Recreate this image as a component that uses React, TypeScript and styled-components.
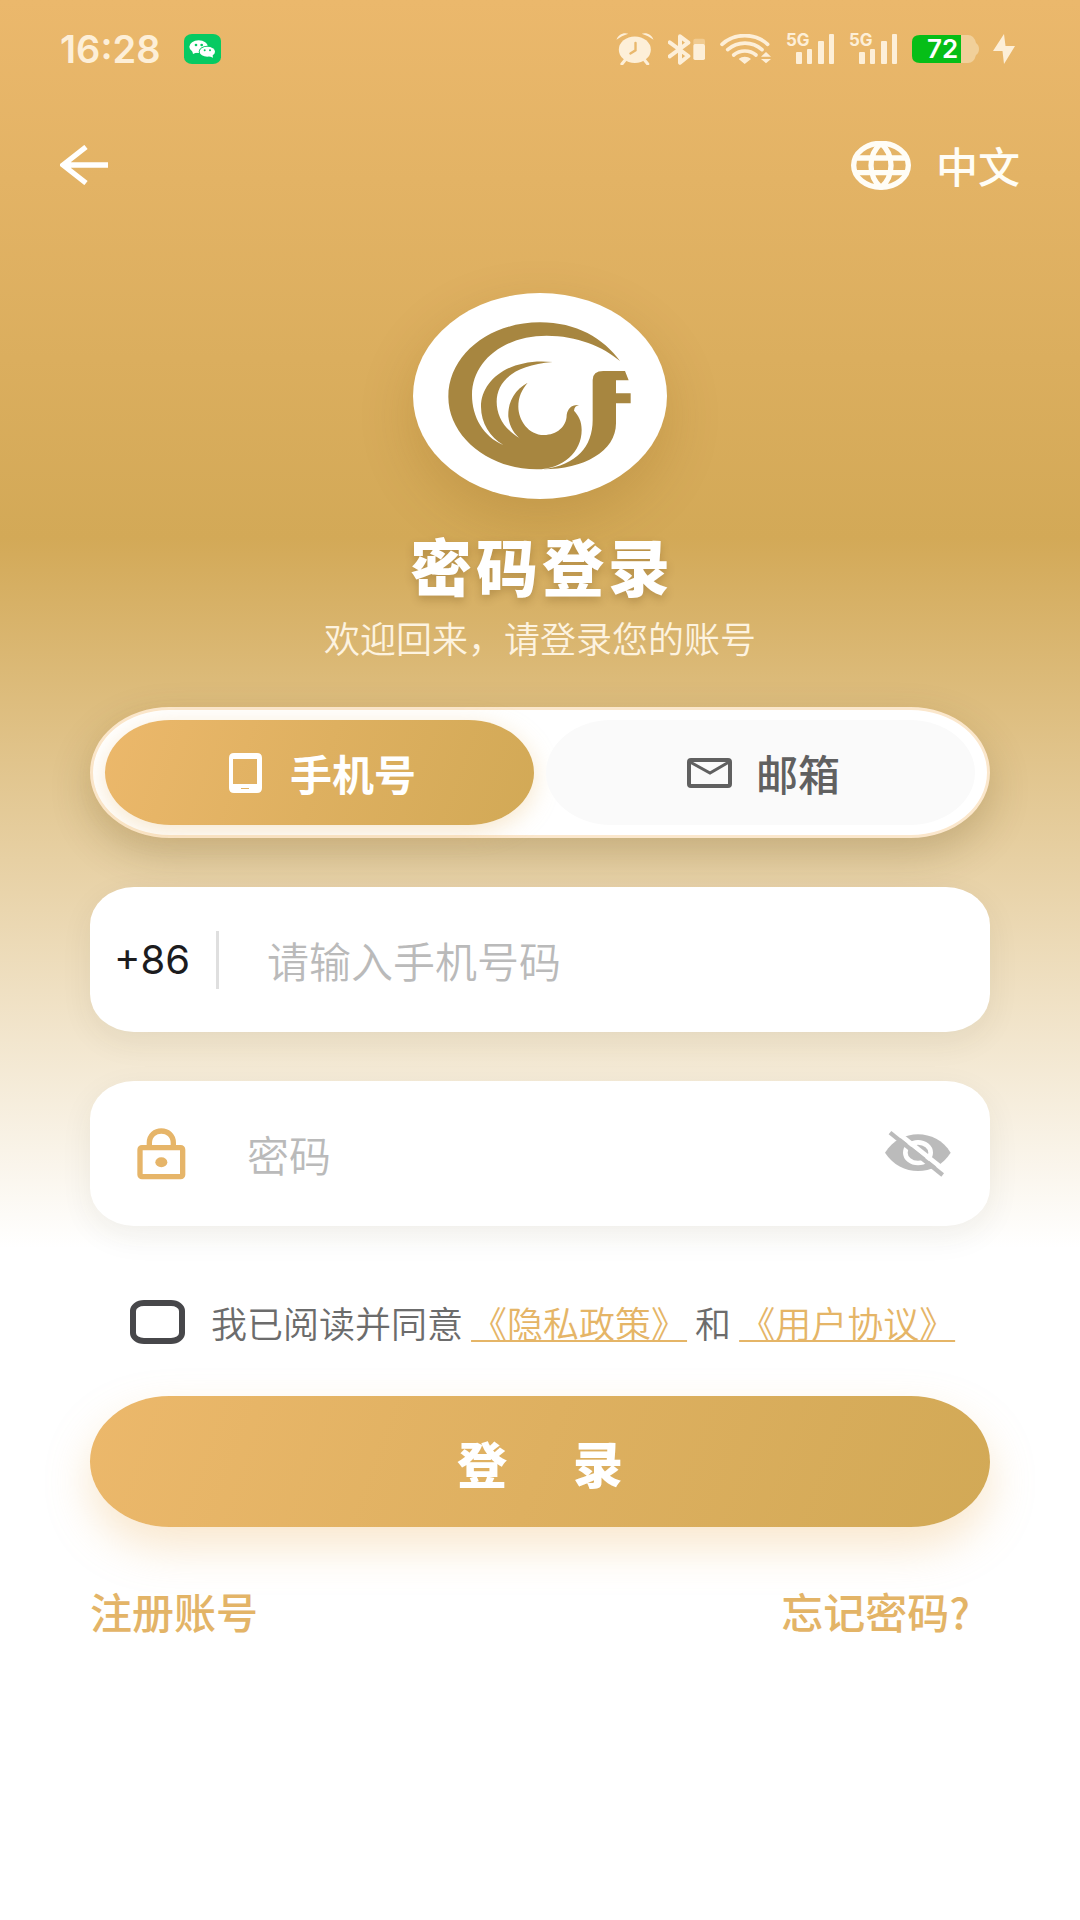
import { FC, useState } from "react";
import styled, { createGlobalStyle, css } from "styled-components";

const GlobalStyle = createGlobalStyle`
  *, *::before, *::after {
    box-sizing: border-box;
  }

  body {
    margin: 0;
    background: #ffffff;
    font-family: "Noto Sans CJK SC", "Noto Sans", sans-serif;
  }

  button, input {
    font: inherit;
    border: none;
    margin: 0;
    padding: 0;
    background: none;
  }
`;

const gold = "linear-gradient(110deg, #ecb86b 0%, #deb060 50%, #d2a956 100%)";

const Page = styled.div`
  min-height: 100vh;
  background: linear-gradient(
    180deg,
    #ebb86c 0%,
    #d3a957 28%,
    #ffffff 65%,
    #ffffff 100%
  );
`;

const StatusBar = styled.header`
  display: flex;
  align-items: center;
  justify-content: space-between;
  height: 98px;
  padding: 0 65px 0 60px;
  color: #fdefd8;
`;

const StatusGroup = styled.div<{ $gap: number }>`
  display: flex;
  align-items: center;
  gap: ${(p) => p.$gap}px;
`;

const Clock = styled.time`
  font-family: Inter, sans-serif;
  font-size: 38px;
  font-weight: 600;
`;

const NavBar = styled.nav`
  display: flex;
  align-items: center;
  justify-content: space-between;
  height: 134px;
  padding: 0 60px;
`;

const NavButton = styled.button`
  display: flex;
  align-items: center;
  gap: 25px;
  color: #fffdf6;
  font-size: 42px;
  line-height: 48px;
  font-weight: 500;
  cursor: pointer;
`;

const Content = styled.main`
  display: flex;
  flex-direction: column;
  padding: 61px 90px 0;
`;

const Brand = styled.div`
  display: flex;
  flex-direction: column;
  align-items: center;
  text-align: center;
`;

const LogoPlate = styled.div`
  display: flex;
  border-radius: 50%;
  background: #ffffff;
  box-shadow: 0 20px 56px rgba(120, 80, 10, 0.2);
`;

const Title = styled.h1`
  margin: 30px 0 0;
  padding-left: 4px;
  font-size: 62px;
  line-height: 72px;
  font-weight: 900;
  letter-spacing: 4px;
  color: #ffffff;
  text-shadow: 0 4px 8px rgba(90, 60, 10, 0.25);
`;

const Subtitle = styled.p`
  margin: 14px 0 0;
  font-size: 36px;
  line-height: 44px;
  font-weight: 350;
  color: #fdf3e0;
`;

const Tabs = styled.div`
  display: grid;
  grid-template-columns: 1fr 1fr;
  gap: 12px;
  height: 131px;
  margin-top: 48px;
  padding: 10px 12px;
  border: 3px solid #fbe7cc;
  border-radius: 80px / 66px;
  background: #ffffff;
  box-shadow: 0 16px 40px rgba(90, 70, 20, 0.24);
`;

const Tab = styled.button<{ $active: boolean }>`
  display: flex;
  align-items: center;
  justify-content: center;
  padding-left: 6px;
  border-radius: 66px / 53px;
  background: #fafafa;
  color: #606060;
  font-size: 42px;
  font-weight: 500;
  cursor: pointer;

  ${(p) =>
    p.$active &&
    css`
      background: ${gold};
      color: #ffffff;
      font-weight: 700;
      box-shadow: 0 6px 24px rgba(232, 182, 107, 0.35);
    `}
`;

const TabLabel = styled.span<{ $gap: number }>`
  margin-left: ${(p) => p.$gap}px;
`;

const Field = styled.div`
  display: flex;
  align-items: center;
  height: 145px;
  margin-top: 49px;
  border-radius: 44px / 38px;
  background: #ffffff;
  box-shadow: 0 10px 32px rgba(60, 50, 30, 0.07);
`;

const CountryCode = styled.button`
  padding: 0 26px 0 24px;
  color: #1c1c1e;
  font-family: Inter, sans-serif;
  font-size: 40px;
  cursor: pointer;
`;

const Divider = styled.span`
  flex: none;
  width: 3px;
  height: 58px;
  background: #dfdfdf;
`;

const FieldIcon = styled.span`
  display: flex;
  flex: none;
  margin-left: 47px;
`;

const FieldInput = styled.input<{ $indent: number }>`
  flex: 1;
  min-width: 0;
  height: 100%;
  padding-left: ${(p) => p.$indent}px;
  outline: none;
  color: #1c1c1e;
  font-size: 42px;
  font-weight: 350;

  &::placeholder {
    color: #bababa;
    opacity: 1;
  }
`;

const EyeButton = styled.button`
  display: flex;
  flex: none;
  margin-right: 39px;
  cursor: pointer;
`;

const Agreement = styled.div`
  display: flex;
  align-items: center;
  gap: 26px;
  height: 48px;
  margin-top: 72px;
  padding-left: 40px;
  color: #6c6c6c;
  font-size: 36px;
  line-height: 48px;
  font-weight: 350;
  white-space: nowrap;
`;

const CheckBox = styled.input`
  appearance: none;
  flex: none;
  width: 55px;
  height: 44px;
  border: 6px solid #47474a;
  border-radius: 14px / 11px;
  cursor: pointer;

  &:checked {
    background: #e6b568;
  }
`;

const PolicyLink = styled.a`
  color: #e5b567;
  text-decoration: underline;
  text-decoration-thickness: 2px;
  text-underline-offset: 2px;
`;

const SubmitButton = styled.button`
  height: 131px;
  margin-top: 50px;
  padding-left: 8px;
  border-radius: 80px / 66px;
  background: ${gold};
  box-shadow: 0 20px 44px rgba(236, 184, 107, 0.34);
  color: #ffffff;
  font-size: 50px;
  font-weight: 900;
  letter-spacing: 8px;
  cursor: pointer;
`;

const Footer = styled.footer`
  display: flex;
  justify-content: space-between;
  margin-top: 56px;
  padding-right: 20px;
`;

const FooterLink = styled.a`
  color: #e3b467;
  font-size: 42px;
  line-height: 56px;
  font-weight: 500;
  text-decoration: none;
`;

const WeChatIcon: FC = () => (
  <svg width="37" height="30" viewBox="0 0 111 90">
    <rect width="111" height="90" rx="24" ry="20" fill="#07ca62" />
    <g fill="#ffffff">
      <ellipse cx="44" cy="38" rx="28" ry="19" />
      <path d="M24 48l3 12 14-6z" />
      <ellipse cx="70" cy="53" rx="26" ry="18" fill="#07ca62" />
      <ellipse cx="70" cy="53" rx="23" ry="15" />
      <path d="M74 66l13 5-2-12z" />
    </g>
    <g fill="#07ca62">
      <circle cx="36" cy="33" r="4" />
      <circle cx="53" cy="33" r="4" />
      <circle cx="62" cy="49" r="3" />
      <circle cx="78" cy="49" r="3" />
    </g>
  </svg>
);

const AlarmIcon: FC = () => (
  <svg width="38" height="32" viewBox="0 0 111 94" fill="currentColor">
    <ellipse cx="55" cy="49" rx="47" ry="39" />
    <path d="M1 20C6 4 22-3 36 2 22 6 12 12 1 20zM110 20C105 4 89-3 75 2c14 4 24 10 35 18z" />
    <path
      d="M26 80l-9 11M84 80l9 11"
      stroke="currentColor"
      strokeWidth="9"
      strokeLinecap="round"
    />
    <path
      d="M57 29v22L42 60"
      fill="none"
      stroke="#e9b86d"
      strokeWidth="7"
      strokeLinecap="round"
    />
  </svg>
);

const BluetoothIcon: FC = () => (
  <svg width="38" height="31" viewBox="0 0 114 93">
    <path
      d="M5 25l56 41-25 20V7l25 19L5 67"
      fill="none"
      stroke="currentColor"
      strokeWidth="12"
      strokeLinejoin="round"
      strokeLinecap="round"
    />
    <rect x="76" y="14" width="35" height="20" rx="6" fill="#f1cb90" />
    <rect x="76" y="30" width="35" height="48" rx="5" fill="currentColor" />
  </svg>
);

const WifiIcon: FC = () => (
  <svg width="52" height="30" viewBox="0 0 156 90">
    <g
      fill="none"
      stroke="currentColor"
      strokeWidth="11"
      strokeLinecap="round"
    >
      <path d="M6 31C43-4 106-4 143 31" />
      <path d="M23 47c30-26 74-26 103 0" />
      <path d="M41 63c19-16 48-16 67 0" />
    </g>
    <path
      d="M56 75c11-9 26-9 37 0L74 90zM123 68l15-14 15 14zM123 75l15 13 15-13z"
      fill="currentColor"
    />
  </svg>
);

const SignalText = styled.text`
  font-family: Inter, sans-serif;
  font-size: 17px;
  font-weight: 700;
`;

const SignalIcon: FC = () => (
  <svg width="49" height="48" viewBox="0 -8 49 48" fill="currentColor">
    <SignalText x="0" y="13">
      5G
    </SignalText>
    <rect x="10" y="19" width="6" height="12" rx="1" />
    <rect x="21" y="16" width="5" height="15" rx="1" />
    <rect x="32" y="8" width="6" height="23" rx="1" />
    <rect x="43" y="1" width="5" height="30" rx="1" />
  </svg>
);

const BatteryText = styled.text`
  font-family: Inter, sans-serif;
  font-size: 26px;
  font-weight: 600;
  fill: #ffffff;
`;

const BatteryIcon: FC = () => (
  <svg width="67" height="44" viewBox="0 -8 67 44">
    <path
      d="M48 0h8q6 0 8 8q3 2 3 6t-3 6q-2 8-8 8h-8z"
      fill="#f1d09a"
    />
    <path d="M8 0h41v28H8q-8 0-8-7V7q0-7 8-7z" fill="#06be17" />
    <BatteryText x="15" y="23">
      72
    </BatteryText>
  </svg>
);

const BoltIcon: FC = () => (
  <svg width="22" height="30" viewBox="0 0 22 30" fill="currentColor">
    <path d="M11 0L0 17h9.500l1.500 13L22 12h-9.500z" />
  </svg>
);

const BackIcon: FC = () => (
  <svg width="48" height="40" viewBox="0 0 144 120">
    <path
      d="M78 6L9 60l69 54M9 60h135"
      fill="none"
      stroke="#ffffff"
      strokeWidth="16"
    />
  </svg>
);

const GlobeIcon: FC = () => (
  <svg
    width="60"
    height="49"
    viewBox="0 0 180 147"
    fill="none"
    stroke="#fffdf6"
    strokeWidth="16"
  >
    <ellipse cx="90" cy="73" rx="82" ry="66" />
    <path d="M90 7C50 42 50 104 90 140M90 7c40 35 40 97 0 133M16 51h148M16 95h148" />
  </svg>
);

const Logo: FC = () => (
  <svg width="254" height="206" viewBox="69 69 762 618" fill="#a78640">
    <path d="M690 273C640 205 560 157 450 157C298 157 175 255 175 380C175 502 300 598 440 598C520 598 575 545 575 480C575 452 565 436 552 422C553 412 558 407 567 405C545 403 533 415 530 435C530 470 500 495 462 495C415 495 385 450 385 410C385 380 395 360 413 338C375 358 353 395 355 440C358 470 375 495 393 507C345 480 320 440 320 395C320 335 370 285 488 276C360 262 273 330 273 410C273 460 300 500 340 525C280 500 246 440 246 375C246 275 340 197 470 197C560 197 640 230 690 273Z" />
    <path d="M460 598C560 585 608 530 608 450V330Q608 303 640 303H705L716 331H678V370H722V400H678V460C678 545 580 598 460 598Z" />
  </svg>
);

const PhoneIcon: FC = () => (
  <svg width="33" height="40" viewBox="0 0 33 40">
    <path
      fillRule="evenodd"
      fill="#ffffff"
      d="M5 0h23q5 0 5 5v30q0 5-5 5H5q-5 0-5-5V5q0-5 5-5zM4 6v25h24V6zM12 35v1h8v-1z"
    />
  </svg>
);

const MailIcon: FC = () => (
  <svg width="45" height="30" viewBox="0 0 45 30">
    <rect
      x="2"
      y="2"
      width="41"
      height="26"
      rx="2"
      fill="none"
      stroke="#606060"
      strokeWidth="4"
    />
    <path d="M3 4l20 11L42 4" fill="none" stroke="#606060" strokeWidth="3" />
  </svg>
);

const LockIcon: FC = () => (
  <svg width="49" height="52" viewBox="0 0 147 156">
    <g fill="none" stroke="#e6b569" strokeWidth="16">
      <rect x="9" y="59" width="128" height="87" rx="6" />
      <path d="M37 59V45c0-48 72-48 72 0v14" />
    </g>
    <ellipse cx="73" cy="103" rx="18" ry="15" fill="#e6b569" />
  </svg>
);

const EyeOffIcon: FC = () => (
  <svg width="66" height="48" viewBox="134 182 198 144">
    <path
      d="M134 250C158 213 195 195 233 195S308 213 331 250C308 287 271 305 233 305S158 287 134 250z"
      fill="#bbbbbb"
    />
    <ellipse
      cx="233"
      cy="250"
      rx="38"
      ry="31"
      fill="none"
      stroke="#ffffff"
      strokeWidth="14"
    />
    <path d="M160 181l158 126" stroke="#ffffff" strokeWidth="14" />
    <path d="M149 190l158 127" stroke="#bbbbbb" strokeWidth="13" />
  </svg>
);

type LoginMode = "phone" | "email";

const App: FC = () => {
  const [mode, setMode] = useState<LoginMode>("phone");
  const [visible, setVisible] = useState(false);

  return (
    <>
      <GlobalStyle />
      <Page>
        <StatusBar>
          <StatusGroup $gap={23}>
            <Clock>16:28</Clock>
            <WeChatIcon />
          </StatusGroup>
          <StatusGroup $gap={14}>
            <AlarmIcon />
            <BluetoothIcon />
            <WifiIcon />
            <SignalIcon />
            <SignalIcon />
            <BatteryIcon />
            <BoltIcon />
          </StatusGroup>
        </StatusBar>
        <NavBar>
          <NavButton type="button" aria-label="返回">
            <BackIcon />
          </NavButton>
          <NavButton type="button">
            <GlobeIcon />
            中文
          </NavButton>
        </NavBar>
        <Content>
          <Brand>
            <LogoPlate>
              <Logo />
            </LogoPlate>
            <Title>密码登录</Title>
            <Subtitle>欢迎回来，请登录您的账号</Subtitle>
          </Brand>
          <Tabs>
            <Tab
              type="button"
              $active={mode === "phone"}
              onClick={() => setMode("phone")}
            >
              <PhoneIcon />
              <TabLabel $gap={28}>手机号</TabLabel>
            </Tab>
            <Tab
              type="button"
              $active={mode === "email"}
              onClick={() => setMode("email")}
            >
              <MailIcon />
              <TabLabel $gap={24}>邮箱</TabLabel>
            </Tab>
          </Tabs>
          <Field>
            <CountryCode type="button">+86</CountryCode>
            <Divider />
            <FieldInput
              $indent={48}
              type="tel"
              aria-label="手机号码"
              placeholder="请输入手机号码"
            />
          </Field>
          <Field>
            <FieldIcon>
              <LockIcon />
            </FieldIcon>
            <FieldInput
              $indent={61}
              type={visible ? "text" : "password"}
              aria-label="密码"
              placeholder="密码"
            />
            <EyeButton
              type="button"
              aria-label="显示密码"
              onClick={() => setVisible(!visible)}
            >
              <EyeOffIcon />
            </EyeButton>
          </Field>
          <Agreement>
            <CheckBox type="checkbox" id="agree" />
            <div>
              <label htmlFor="agree">我已阅读并同意</label>{" "}
              <PolicyLink href="#privacy">《隐私政策》</PolicyLink> 和{" "}
              <PolicyLink href="#terms">《用户协议》</PolicyLink>
            </div>
          </Agreement>
          <SubmitButton type="submit">登　录</SubmitButton>
          <Footer>
            <FooterLink href="#register">注册账号</FooterLink>
            <FooterLink href="#forgot">忘记密码?</FooterLink>
          </Footer>
        </Content>
      </Page>
    </>
  );
};

export default App;
